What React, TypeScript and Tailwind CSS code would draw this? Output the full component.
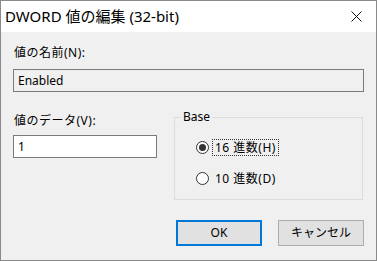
const font = {
  fontFamily: '"Noto Sans", "Noto Sans CJK JP", sans-serif',
};

function Radio({ checked, label, focused }: { checked?: boolean; label: string; focused?: boolean }) {
  return (
    <div className="flex h-[17px] items-center">
      <span className="flex h-[13px] w-[13px] items-center justify-center rounded-full border border-[#333] bg-white">
        {checked ? <span className="h-[7px] w-[7px] rounded-full bg-[#333]" /> : null}
      </span>
      <span
        className={
          "ml-[4px] px-[2px] leading-[15px] tracking-[0.5px] " +
          (focused ? "outline outline-1 outline-dotted outline-[#333]" : "")
        }
      >
        {label}
      </span>
    </div>
  );
}

export default function App() {
  return (
    <div
      className="flex h-[261px] w-[377px] flex-col border border-[#8a8a8a] bg-[#f0f0f0] text-[12px] text-black"
      style={font}
    >
      <div className="flex h-[31px] shrink-0 items-center justify-between bg-white pl-[4px] pr-[14px]">
        <span className="text-[15px] leading-none">DWORD 値の編集 (32-bit)</span>
        <svg width="11" height="11" viewBox="0 0 11 11" className="mb-[1px]">
          <path d="M0.5 0.5 L10.5 10.5 M10.5 0.5 L0.5 10.5" stroke="#111" strokeWidth="1" />
        </svg>
      </div>

      <div className="flex flex-col px-[12px]">
        <div className="mt-[13px] h-[16px] pl-[1px] leading-[16px] tracking-[0.5px]">値の名前(N):</div>
        <div className="mt-[8px] flex h-[23px] items-center border border-[#7a7a7a] bg-[#f0f0f0] pl-[4px]">
          Enabled
        </div>

        <div className="mt-[17px] flex gap-[17px]">
          <div className="flex w-[144px] flex-col pt-[4px]">
            <div className="h-[16px] pl-[1px] leading-[16px] tracking-[0.5px]">値のデータ(V):</div>
            <div className="mt-[6px] flex h-[23px] items-center border border-[#7a7a7a] bg-white pl-[4px]">
              1
            </div>
          </div>

          <fieldset className="h-[91px] w-[189px] border border-[#dcdcdc] pl-[21px] pt-[14px]">
            <legend className="ml-[-15px] px-[2px] leading-[16px]">Base</legend>
            <div className="flex flex-col gap-[14px]">
              <Radio checked focused label="16 進数(H)" />
              <Radio label="10 進数(D)" />
            </div>
          </fieldset>
        </div>

        <div className="mt-[20px] flex justify-end gap-[16px]">
          <button className="h-[26px] w-[86px] border-2 border-[#0078d7] bg-[#e1e1e1] leading-none">OK</button>
          <button className="h-[26px] w-[86px] border border-[#adadad] bg-[#e1e1e1] leading-none">キャンセル</button>
        </div>
      </div>
    </div>
  );
}
